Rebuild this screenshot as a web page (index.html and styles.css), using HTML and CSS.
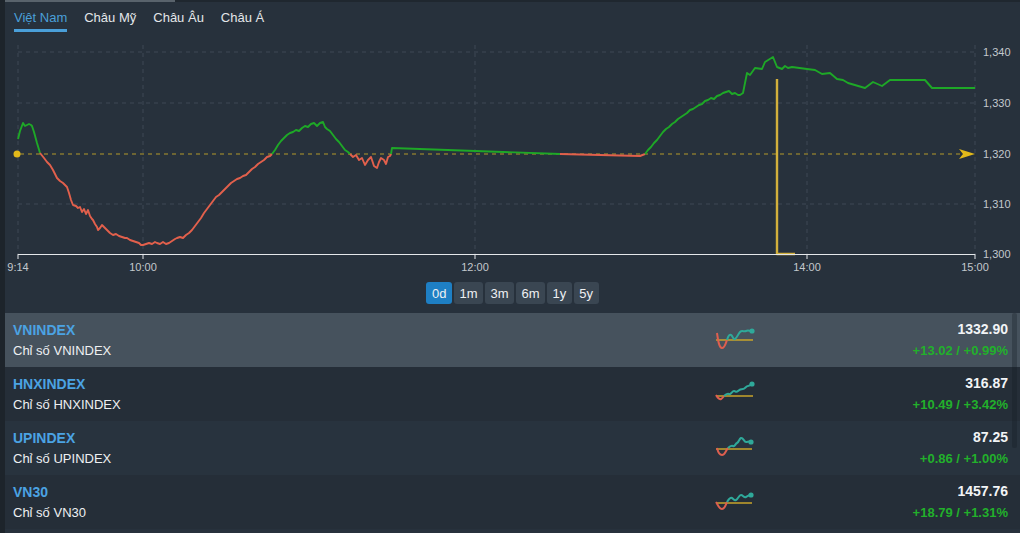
FILE: index.html
```html
<!DOCTYPE html>
<html lang="vi">
<head>
<meta charset="utf-8">
<title>Chỉ số thị trường</title>
<link rel="stylesheet" href="styles.css">
</head>
<body>
<div class="app">
  <div class="edge"></div>
  <div class="main">
    <div class="topline"></div>
    <nav class="tabs">
      <span class="tab active">Việt Nam</span>
      <span class="tab">Châu Mỹ</span>
      <span class="tab">Châu Âu</span>
      <span class="tab">Châu Á</span>
    </nav>
    <svg class="chart" viewBox="5 38 1015 240" width="1015" height="240">
      <g class="grid">
        <line x1="18" y1="52" x2="975" y2="52"/>
        <line x1="18" y1="103" x2="975" y2="103"/>
        <line x1="18" y1="204" x2="975" y2="204"/>
        <line x1="18" y1="45" x2="18" y2="254"/>
        <line x1="143" y1="45" x2="143" y2="254"/>
        <line x1="475" y1="45" x2="475" y2="254"/>
        <line x1="807" y1="45" x2="807" y2="254"/>
        <line x1="975" y1="45" x2="975" y2="254"/>
      </g>
      <line class="ref" x1="20" y1="154" x2="962" y2="154"/>
      <circle class="refdot" cx="17" cy="154" r="3.5"/>
      <path class="refarrow" d="M959,149 L975,154 L959,159 L963,154 Z"/>
      <polyline class="up" points="18,139 20,131 23,123 25,126 27,125 29,124 31,125 32,126 34,132 37,143 40,153"/>
      <polyline class="down" points="40,153 44,158 47,162 50,165 53,170 57,178 60,181 63,183 67,187 69,193 71,200 73,205 76,206 78,208 80,207 82,212 84,209 86,214 88,210 90,216 92,219 93,220 95,224 97,227 98,230 100,228 102,225 104,227 106,229 108,231 110,233 113,235 116,234 119,236 122,237 125,238 127,238 130,240 133,241 136,242 139,243 141,245 143,245 146,244 149,243 152,244 155,242 157,243 160,244 163,242 166,244 169,243 172,241 175,239 177,238 180,237 183,238 186,235 189,233 192,230 195,226 198,222 201,218 204,213 207,209 210,205 213,201 216,197 219,195 222,192 225,189 228,186 231,183 234,181 237,179 240,178 243,176 246,175 249,172 252,169 255,167 258,164 261,162 264,160 267,157 270,156 272,154"/>
      <polyline class="up" points="272,154 275,150 278,145 281,141 284,138 287,135 290,133 293,132 296,130 299,131 302,128 305,126 308,127 311,124 314,123 317,126 320,123 323,122 325,127 327,129 330,131 333,135 336,139 339,142 342,146 345,150 348,152 350,154"/>
      <polyline class="down" points="350,154 353,157 356,155 359,160 362,158 365,165 368,160 371,157 374,166 377,168 379,162 381,158 384,160 386,164 388,157 390,156 391,154"/>
      <polyline class="up" points="391,154 392,148 560,154"/>
      <polyline class="down" points="560,154 600,155 640,156 645,154"/>
      <polyline class="up" points="645,154 648,150 651,147 654,143 657,140 660,136 663,132 666,129 669,127 672,124 675,122 678,119 681,117 684,115 687,113 690,110 693,109 696,107 699,105 702,104 705,101 708,100 711,98 714,99 717,96 720,95 723,93 726,92 729,91 732,94 735,93 738,95 740,95 743,93 747,73 750,75 755,68 762,69 765,62 773,57 777,67 782,69 785,66 788,68 792,67 807,69 815,70 822,74 830,73 837,79 843,80 848,83 865,88 873,82 882,86 890,80 925,80 932,88 975,88"/>
      <polyline class="vol" points="777,79 777,254 795,254"/>
      <line class="axis" x1="18" y1="254.5" x2="975" y2="254.5"/>
      <g class="ticks">
        <line x1="18" y1="254" x2="18" y2="259"/>
        <line x1="143" y1="254" x2="143" y2="259"/>
        <line x1="475" y1="254" x2="475" y2="259"/>
        <line x1="807" y1="254" x2="807" y2="259"/>
        <line x1="975" y1="254" x2="975" y2="259"/>
      </g>
      <g class="ylabels">
        <text x="983" y="56">1,340</text>
        <text x="983" y="107">1,330</text>
        <text x="983" y="158">1,320</text>
        <text x="983" y="208">1,310</text>
        <text x="983" y="258">1,300</text>
      </g>
      <g class="xlabels">
        <text x="18" y="271">9:14</text>
        <text x="143" y="271">10:00</text>
        <text x="475" y="271">12:00</text>
        <text x="807" y="271">14:00</text>
        <text x="975" y="271">15:00</text>
      </g>
    </svg>
    <div class="periods">
      <div class="group">
        <span class="btn active">0d</span>
        <span class="btn">1m</span>
        <span class="btn">3m</span>
        <span class="btn">6m</span>
        <span class="btn">1y</span>
        <span class="btn">5y</span>
      </div>
    </div>
    <div class="list">
      <div class="row selected">
        <div class="names">
          <div class="code">VNINDEX</div>
          <div class="desc">Chỉ số VNINDEX</div>
        </div>
        <svg class="spark" viewBox="0 0 42 28" width="42" height="28">
          <line class="sb" x1="1" y1="14" x2="38" y2="14"/>
          <path class="sr" d="M2,7 C3,14 4,22 7,22 C10,22 11,16 12,14"/>
          <path class="st" d="M12,14 C13,11 14,8 16,9 C18,10 18,14 20,13 C22,12 23,8 25,6 C27,4 29,6 31,5 C33,4 34,5 37,5"/>
          <circle class="sd" cx="37" cy="5" r="2.6"/>
        </svg>
        <div class="vals">
          <div class="price">1332.90</div>
          <div class="chg">+13.02 / +0.99%</div>
        </div>
      </div>
      <div class="row">
        <div class="names">
          <div class="code">HNXINDEX</div>
          <div class="desc">Chỉ số HNXINDEX</div>
        </div>
        <svg class="spark" viewBox="0 0 42 28" width="42" height="28">
          <line class="sb" x1="1" y1="16" x2="38" y2="16"/>
          <path class="sr" d="M1,15 C3,18 4,20 6,19 C8,18 8,17 9,16"/>
          <path class="st" d="M9,16 C11,14 12,13 14,14 C16,15 17,11 19,11 C21,11 21,13 23,11 C25,9 26,9 28,9 C30,9 31,6 33,6 C35,6 36,4 37,4"/>
          <circle class="sd" cx="37" cy="4" r="2.6"/>
        </svg>
        <div class="vals">
          <div class="price">316.87</div>
          <div class="chg">+10.49 / +3.42%</div>
        </div>
      </div>
      <div class="row alt">
        <div class="names">
          <div class="code">UPINDEX</div>
          <div class="desc">Chỉ số UPINDEX</div>
        </div>
        <svg class="spark" viewBox="0 0 42 28" width="42" height="28">
          <line class="sb" x1="1" y1="15" x2="37" y2="15"/>
          <path class="sr" d="M2,14 C3,18 4,21 7,21 C10,21 11,16 13,14"/>
          <path class="st" d="M13,14 C15,12 16,11 18,12 C20,13 20,10 22,9 C24,8 24,5 26,4 C28,3 29,8 31,8 C33,8 34,7 36,8"/>
          <circle class="sd" cx="36" cy="8" r="2.6"/>
        </svg>
        <div class="vals">
          <div class="price">87.25</div>
          <div class="chg">+0.86 / +1.00%</div>
        </div>
      </div>
      <div class="row">
        <div class="names">
          <div class="code">VN30</div>
          <div class="desc">Chỉ số VN30</div>
        </div>
        <svg class="spark" viewBox="0 0 42 28" width="42" height="28">
          <line class="sb" x1="1" y1="15" x2="37" y2="15"/>
          <path class="sr" d="M1,14 C3,17 4,21 7,21 C10,21 11,16 12,14"/>
          <path class="st" d="M12,14 C14,11 15,9 17,10 C19,11 19,13 21,12 C23,11 24,7 26,7 C28,7 29,10 31,9 C33,8 34,7 36,7"/>
          <circle class="sd" cx="36" cy="7" r="2.6"/>
        </svg>
        <div class="vals">
          <div class="price">1457.76</div>
          <div class="chg">+18.79 / +1.31%</div>
        </div>
      </div>
      <div class="scrollthumb"></div>
    </div>
  </div>
</div>
</body>
</html>
```

FILE: styles.css
```css
html, body {
  margin: 0;
  padding: 0;
  width: 1020px;
  height: 533px;
  overflow: hidden;
  background: #27313c;
  font-family: "Liberation Sans", Arial, sans-serif;
  color: #e6e9ec;
}

.app {
  display: flex;
  height: 533px;
}

.edge {
  width: 5px;
  flex: none;
  background: #1d242b;
}

.main {
  flex: 1;
  display: flex;
  flex-direction: column;
  min-width: 0;
}

.topline {
  height: 2px;
  background: linear-gradient(to right, #59636c 0, #59636c 170px, #1f272f 170px);
}

.tabs {
  display: flex;
  gap: 17px;
  padding: 8px 0 0 9px;
  height: 28px;
}

.tab {
  font-size: 13px;
  line-height: 16px;
  color: #e3e6e9;
  height: 22px;
  box-sizing: border-box;
}

.tab.active {
  color: #4a9fd9;
  border-bottom: 3px solid #4a9fd9;
}

.chart {
  display: block;
  flex: none;
}

.grid line {
  stroke: #3e4954;
  stroke-width: 1;
  stroke-dasharray: 4 4;
}

.ref {
  stroke: #b39a2a;
  stroke-width: 1.2;
  stroke-dasharray: 4 4;
}

.refdot, .refarrow {
  fill: #e2b91a;
}

.up, .down, .vol {
  fill: none;
  stroke-width: 1.9;
  stroke-linejoin: round;
}

.up { stroke: #1ea827; }
.down { stroke: #e2604c; }
.vol { stroke: #d2b03c; stroke-width: 2.4; }

.axis {
  stroke: #e4e7ea;
  stroke-width: 1;
}

.ticks line {
  stroke: #e4e7ea;
  stroke-width: 1;
}

.ylabels text, .xlabels text {
  font-family: "Liberation Sans", Arial, sans-serif;
  font-size: 11px;
  fill: #c3c8cd;
}

.xlabels text {
  text-anchor: middle;
}

.periods {
  display: flex;
  justify-content: center;
  height: 35px;
  padding-top: 4px;
  box-sizing: border-box;
}

.group {
  display: flex;
  gap: 2px;
  height: 22px;
}

.btn {
  display: flex;
  align-items: center;
  justify-content: center;
  padding: 0 5.5px;
  min-width: 13px;
  background: #3a4652;
  border-radius: 3px;
  font-size: 13px;
  color: #eef0f2;
}

.btn.active {
  background: #1e7fc4;
}

.list {
  position: relative;
  display: flex;
  flex-direction: column;
}

.row {
  display: grid;
  grid-template-columns: 1fr 42px 251px;
  align-items: center;
  height: 54px;
  padding: 0 12px 0 8px;
  background: #252e38;
}

.row.alt {
  background: #28333e;
}

.row.selected {
  background: #46525d;
}

.names {
  display: flex;
  flex-direction: column;
  gap: 5px;
  padding-top: 1px;
}

.code {
  font-size: 14px;
  font-weight: bold;
  color: #4ba3e3;
  line-height: 16px;
}

.desc {
  font-size: 13px;
  color: #eef0f2;
  line-height: 16px;
}

.spark {
  display: block;
}

.sb { stroke: #c9a42a; stroke-width: 1.3; }
.sr { fill: none; stroke: #dd5f4f; stroke-width: 2; }
.st { fill: none; stroke: #2fa99a; stroke-width: 2; }
.sd { fill: #2fa99a; }

.vals {
  display: flex;
  flex-direction: column;
  align-items: flex-end;
  gap: 6px;
}

.price {
  font-size: 14px;
  font-weight: bold;
  color: #f2f4f6;
  line-height: 16px;
}

.chg {
  font-size: 13px;
  font-weight: bold;
  color: #22b02b;
  line-height: 16px;
}

.scrollthumb {
  position: absolute;
  top: 0;
  right: 3px;
  width: 5px;
  height: 135px;
  background: rgba(20, 26, 32, 0.3);
  border-radius: 2px;
}
```
